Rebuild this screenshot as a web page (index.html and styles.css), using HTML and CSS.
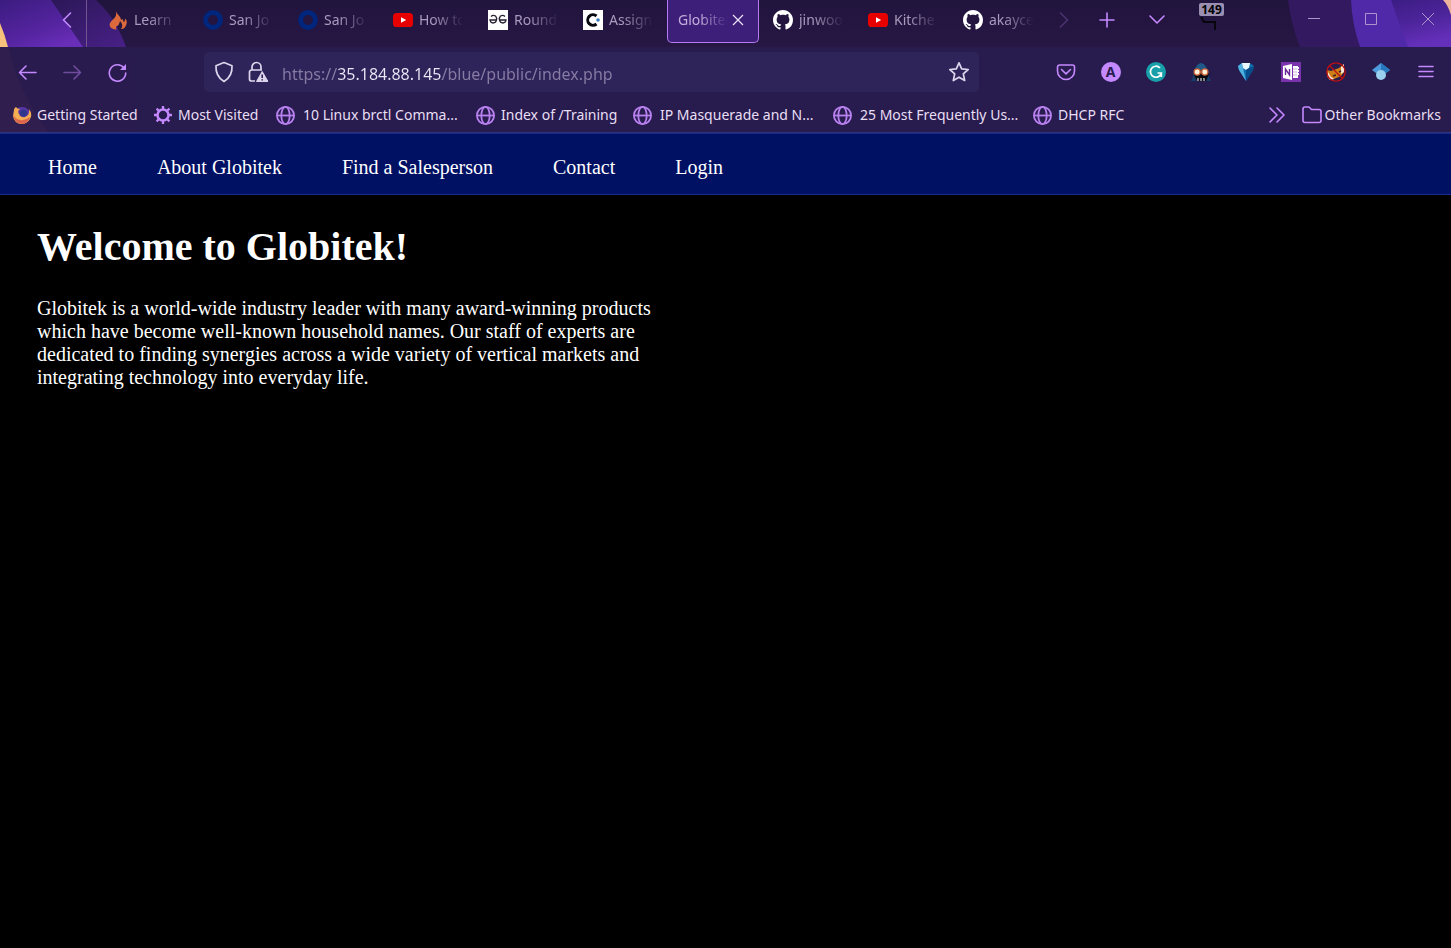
FILE: index.html
```
<!DOCTYPE html>
<html lang="en">
<head>
<meta charset="utf-8">
<title>Globitek</title>
<link rel="stylesheet" href="styles.css">
</head>
<body>
<svg class="sprite" aria-hidden="true">
  <symbol id="globe" viewBox="0 0 20 20"><g fill="none" stroke="currentColor" stroke-width="1.8"><circle cx="9.500" cy="10.500" r="8.600"/><ellipse cx="9.500" cy="10.500" rx="4.200" ry="8.600"/><path d="M1 10.500h17"/></g></symbol>
  <symbol id="ring" viewBox="0 0 20 20"><circle cx="10" cy="10" r="7.400" fill="none" stroke="#00257c" stroke-width="5"/></symbol>
  <symbol id="video" viewBox="0 0 20 20"><rect y="3" width="20" height="14" rx="3.600" fill="#e80000"/><path d="M8 7.200l5.200 2.800L8 12.800z" fill="#fff"/></symbol>
  <symbol id="github" viewBox="0 0 16 16"><path fill="#fff" d="M8 0C3.580 0 0 3.580 0 8c0 3.540 2.290 6.530 5.470 7.590.4.070.55-.17.55-.38 0-.19-.01-.82-.01-1.490-2.010.37-2.530-.49-2.690-.94-.09-.23-.48-.94-.82-1.130-.28-.15-.68-.52-.01-.53.63-.01 1.080.58 1.230.82.72 1.210 1.870.87 2.330.66.070-.52.280-.87.510-1.070-1.780-.2-3.640-.89-3.640-3.950 0-.87.310-1.590.82-2.150-.08-.2-.36-1.020.08-2.120 0 0 .67-.21 2.200.82.64-.18 1.320-.27 2-.27s1.360.09 2 .27c1.530-1.040 2.200-.82 2.200-.82.44 1.100.16 1.920.08 2.120.51.56.82 1.270.82 2.150 0 3.070-1.870 3.750-3.650 3.950.29.25.54.73.54 1.480 0 1.070-.01 1.930-.01 2.200 0 .21.15.46.55.38A8.010 8.010 0 0 0 16 8c0-4.420-3.580-8-8-8z"/></symbol>
</svg>
<header class="browser">
  <svg class="art art-left" width="150" height="132" viewBox="0 0 150 132" aria-hidden="true">
    <defs><linearGradient id="la" x1="0" y1="0" x2=".7" y2="1"><stop offset="0" stop-color="#3b1c80"/><stop offset=".65" stop-color="#5524a0"/><stop offset="1" stop-color="#692eb8"/></linearGradient>
    <linearGradient id="lb" x1="0" y1="0" x2="1" y2="1"><stop offset="0" stop-color="#2a1755"/><stop offset="1" stop-color="#482087"/></linearGradient></defs>
    <path d="M50 0h46q20 18 30 47H40z" fill="url(#lb)"/><path d="M0 0h51l32 47H0z" fill="url(#la)"/><path d="M0 23q5 12 8 24H0z" fill="#f7c27b"/>
    <path d="M0 47h126q12 42 8 85H0z" fill="#3a2058" opacity=".12"/><path d="M0 47h8q12 48 40 85H0z" fill="#3f2850" opacity=".25"/>
  </svg>
  <svg class="art art-right" width="171" height="47" viewBox="0 0 171 47" aria-hidden="true">
    <defs><linearGradient id="ra" x1="0" y1="0" x2=".3" y2="1"><stop offset="0" stop-color="#3c1d84"/><stop offset=".5" stop-color="#4c249a"/><stop offset="1" stop-color="#642fb9"/></linearGradient></defs>
    <path d="M8 0q3 25 12 47h60L71 0z" fill="#33195f"/><path d="M71 0q1 24 9 47h60V0z" fill="#4f29a8"/><path d="M111 0q8 24 17 47h43V0z" fill="url(#ra)"/><path d="M163 0q5 5 8 15V0z" fill="#edb39c"/>
  </svg>
  <div class="tabbar">
    <button class="scroll-left" aria-label="Scroll tabs left"><svg width="12" height="16" viewBox="0 0 12 16"><path d="M9.500 1L2.500 8l7 7" class="line"/></svg></button>
    <nav class="tabs" aria-label="Tabs">
      <button class="tab"><svg class="favicon" viewBox="0 0 20 20"><path d="M8 1c1 4 5 5 5 9l2-1q0 2 .5 3 2-1 1.500-3.500 3 2 1 7-2 4-5 3.500 3-4-1-8-1 5-4 5.500 0 3 1 3-7 0-7.500-5Q2 12 6 8.500 9 6 8 1z" fill="#dd6a3d"/></svg><span class="label">Learn</span></button>
      <button class="tab"><svg class="favicon"><use href="#ring"/></svg><span class="label">San Jo</span></button>
      <button class="tab"><svg class="favicon"><use href="#ring"/></svg><span class="label">San Jo</span></button>
      <button class="tab"><svg class="favicon"><use href="#video"/></svg><span class="label">How to</span></button>
      <button class="tab"><svg class="favicon" viewBox="0 0 20 20"><path d="M0 0h20v20H0z" fill="#fff"/><path d="M3 6.500q2-2 4.500-.5Q9 7.500 8.500 10q-.5 3-3.500 3-2.500 0-3-3h6.500M17 6.500q-2-2-4.500-.5Q11 7.500 11.500 10q.5 3 3.500 3 2.500 0 3-3H11.500" fill="none" stroke="#292133" stroke-width="1.300"/></svg><span class="label">Round</span></button>
      <button class="tab"><svg class="favicon" viewBox="0 0 20 20"><path d="M0 0h20v20H0z" fill="#fff"/><path d="M13.500 6A5.300 5.300 0 1 0 13.500 14" fill="none" stroke="#07080d" stroke-width="3"/><circle cx="15" cy="10" r="1.800" fill="#397bb8"/></svg><span class="label">Assign</span></button>
      <button class="tab active"><span class="label">Globitek</span><svg class="close" width="12" height="12" viewBox="0 0 12 12"><path d="M1 1l10 10M11 1L1 11" stroke="#ece3f7" stroke-width="1.200"/></svg></button>
      <button class="tab"><svg class="favicon"><use href="#github"/></svg><span class="label">jinwoo</span></button>
      <button class="tab"><svg class="favicon"><use href="#video"/></svg><span class="label">Kitche</span></button>
      <button class="tab"><svg class="favicon"><use href="#github"/></svg><span class="label">akayce</span></button>
    </nav>
    <div class="tab-tools">
      <button class="tool dim" aria-label="Scroll tabs right"><svg width="12" height="16" viewBox="0 0 12 16"><path d="M2.500 1l7 7-7 7" class="line"/></svg></button>
      <button class="tool" aria-label="New tab"><svg width="16" height="16" viewBox="0 0 16 16"><path d="M8 1v14M1 8h14" class="line"/></svg></button>
      <button class="tool list" aria-label="List all tabs"><svg width="16" height="16" viewBox="0 0 16 16"><path d="M1 4l7 7 7-7" class="line"/></svg></button>
      <button class="counter" aria-label="149 tabs"><svg width="18" height="14" viewBox="0 0 18 14"><path d="M2 0l3 5h11v8" fill="none" stroke="#08060d" stroke-width="2"/></svg><span class="badge">149</span></button>
    </div>
    <div class="window-controls">
      <button aria-label="Minimize"><svg width="14" height="14" viewBox="0 0 14 14"><path d="M1 6.500h12"/></svg></button>
      <button aria-label="Maximize"><svg width="14" height="14" viewBox="0 0 14 14"><path d="M1.500 1.500h11v11h-11z"/></svg></button>
      <button aria-label="Close"><svg width="14" height="14" viewBox="0 0 14 14"><path d="M1 1l12 12M13 1L1 13"/></svg></button>
    </div>
  </div>
  <div class="toolbar">
    <div class="buttons">
      <button aria-label="Back"><svg viewBox="0 0 20 20"><path d="M18 10.500H1.500M8 4l-6.500 6.500L8 17" class="line"/></svg></button>
      <button class="faded" aria-label="Forward"><svg viewBox="0 0 20 20"><path d="M1 10.500h16.500M11 4l6.500 6.500L11 17" class="line"/></svg></button>
      <button aria-label="Reload"><svg viewBox="0 0 20 20"><path d="M16 6A8.200 8.200 0 1 0 17.700 11" class="line"/><path d="M18 2v6h-6z" fill="#c489ff"/></svg></button>
    </div>
    <div class="address">
      <svg width="20" height="22" viewBox="0 0 20 22"><path d="M10 1.500l8 3.200c.4 6-1.800 12-8 15.800-6.200-3.800-8.400-9.800-8-15.800z" class="pale"/></svg>
      <svg width="20" height="22" viewBox="0 0 20 22"><path d="M4 9V6a4.500 4.500 0 0 1 9 0v3M7 20H3.500A2 2 0 0 1 1.500 18v-7a2 2 0 0 1 2-2H14" class="pale"/><path d="M14.200 10.500L20 20.500H8.500z" fill="#ded5ed" stroke="#ded5ed" stroke-linejoin="round"/><path d="M14.200 13.500v3.500m0 1.200v1.300" stroke="#2d2359" stroke-width="1.600"/></svg>
      <input class="url" type="text" aria-label="Address" value="https://35.184.88.145/blue/public/index.php">
      <button class="star" aria-label="Bookmark this page"><svg width="22" height="22" viewBox="0 0 22 22"><path d="M11 1.800l2.700 6 6.500.7-4.900 4.400 1.400 6.600-5.700-3.300-5.700 3.300 1.400-6.600-4.900-4.400 6.500-.7z" class="pale"/></svg></button>
    </div>
    <div class="buttons">
      <button aria-label="Pocket"><svg viewBox="0 0 20 20"><path d="M3.500 3h13A2 2 0 0 1 18.500 5v4a8.500 8.500 0 0 1-17 0V5a2 2 0 0 1 2-2zM5.500 7.500l4.500 4.300 4.500-4.300" class="line"/></svg></button>
      <button class="account" aria-label="Account"><span>A</span></button>
      <button aria-label="Grammar checker"><svg viewBox="0 0 20 20"><circle cx="10" cy="10" r="10" fill="#189faa"/><path d="M14 6A5.500 5.500 0 1 0 15.300 11H11.500M15.300 11v4" fill="none" stroke="#fff" stroke-width="1.700"/></svg></button>
      <button aria-label="Privacy extension"><svg viewBox="0 0 20 20"><path d="M0 19l2-5q1-12 8-13 7 1 8 13l2 5z" fill="#173c68"/><path d="M3 13l3 6h9l3-7-4-6H6z" fill="#080811"/><path d="M10 1q4 1 5 5l-4 2-2 0-4-2q1-4 5-5z" fill="#205889"/><g fill="#fff0da" stroke="#cf663a" stroke-width="1.300"><circle cx="6.200" cy="10" r="3.100"/><circle cx="13.800" cy="10" r="3.100"/></g><path d="M7 16v3m3-3v3m3-3v3" stroke="#ddd" stroke-width="1.200"/></svg></button>
      <button aria-label="Gem extension"><svg viewBox="0 0 20 20"><path d="M2 4l4-3h8l4 3-1 4-7 11L3 8z" fill="#126fae"/><path d="M2 4l4-3 1 5 3 13L3 8z" fill="#4fb2e0"/><path d="M6 1h8l-1 5-3 2-3-2z" fill="#e9faff"/><path d="M10 8l3-2 5-2-1 4-7 11z" fill="#094c8c"/></svg></button>
      <button aria-label="OneNote clipper"><svg viewBox="0 0 20 20"><path d="M0 0h20v20H0z" fill="#7a32ad"/><path d="M2 4l9-2v16l-9-2zM12 4h5v1h1v2h-1v1h1v2h-1v1h1v2h-1v3h-5z" fill="#fff"/><path d="M4.500 13V7l4 6V7" fill="none" stroke="#6b2798" stroke-width="1.400"/><path d="M12 7h4m-4 3h4m-4 3h4" stroke="#cbaadf"/></svg></button>
      <button aria-label="Fox blocker"><svg viewBox="0 0 20 20"><path d="M1 8l4 1 8-3 5-4v8l-3 4-7 3-4 1-3-4z" fill="#cf7d17"/><path d="M2 10l3 5 3 2-4 1-3-4zM15 5l3-3v8l-3 2z" fill="#f5e5d7"/><path d="M7 14l3-1m3-3l2-1" stroke="#3c202b" stroke-width="1.500"/><g fill="none" stroke="#bd1010" stroke-width="1.300"><circle cx="10" cy="10" r="9.200"/><path d="M3.500 3.500l13 13"/></g></svg></button>
      <button aria-label="Scholar"><svg viewBox="0 0 20 20"><path d="M10 1l9 7-4 3H5L1 8z" fill="#4d9bdc"/><path d="M10 1l9 7-4 3-5-2z" fill="#2878bd"/><circle cx="10" cy="13" r="5" fill="#9bd0ef"/></svg></button>
      <button aria-label="Menu"><svg viewBox="0 0 20 20"><path d="M3 4.500h14M3 9.500h14M3 14.500h14" class="line"/></svg></button>
    </div>
  </div>
  <nav class="bookmarks" aria-label="Bookmarks">
    <a class="bookmark first" href="#"><svg class="favicon" viewBox="0 0 20 20"><circle cx="10" cy="10.500" r="8.500" fill="#5a37a8"/><path d="M2 5q0-2 2-3 1 2 4 2-3 2-1 5 2 4 6 3 5-2 4-8 4 5 1 10-3 5-9 5-7-1-8-8z" fill="#f4ad52"/><path d="M1 8q1 6 7 7 5 1 10-3-2 7-8 7-8 0-9-11z" fill="#dd654e"/><circle cx="11.500" cy="8" r="3.600" fill="#30368c"/></svg>Getting Started</a>
    <a class="bookmark second" href="#"><svg class="favicon" viewBox="0 0 20 20"><g fill="none" stroke="#c489ff"><circle cx="10" cy="10" r="5.500" stroke-width="2.500"/><path d="M10 1v3m0 12v3M1 10h3m12 0h3M3.600 3.600l2.200 2.200m8.400 8.400l2.200 2.200m0-12.800l-2.200 2.200m-8.400 8.400l-2.200 2.200" stroke-width="2.300"/></g></svg>Most Visited</a>
    <a class="bookmark wide" href="#"><svg class="favicon"><use href="#globe"/></svg>10 Linux brctl Comma...</a>
    <a class="bookmark fourth" href="#"><svg class="favicon"><use href="#globe"/></svg>Index of /Training</a>
    <a class="bookmark wide" href="#"><svg class="favicon"><use href="#globe"/></svg>IP Masquerade and N...</a>
    <a class="bookmark wide" href="#"><svg class="favicon"><use href="#globe"/></svg>25 Most Frequently Us...</a>
    <a class="bookmark" href="#"><svg class="favicon"><use href="#globe"/></svg>DHCP RFC</a>
    <button class="more" aria-label="More bookmarks"><svg width="18" height="18" viewBox="0 0 18 18"><path d="M2 2l7 7-7 7M9 2l7 7-7 7" class="line"/></svg></button>
    <a class="bookmark other" href="#"><svg class="favicon" viewBox="0 0 20 20"><path d="M3 2h4l2.500 2.500H17A2 2 0 0 1 19 6.500v9A2 2 0 0 1 17 17.500H3A2 2 0 0 1 1 15.500V4A2 2 0 0 1 3 2z" class="line"/></svg>Other Bookmarks</a>
  </nav>
</header>
<nav class="site-nav" aria-label="Main">
  <a href="#">Home</a><a href="#">About Globitek</a><a href="#">Find a Salesperson</a><a href="#">Contact</a><a href="#">Login</a>
</nav>
<main class="content">
  <h1>Welcome to Globitek!</h1>
  <p>Globitek is a world-wide industry leader with many award-winning products which have become well-known household names. Our staff of experts are dedicated to finding synergies across a wide variety of vertical markets and integrating technology into everyday life.</p>
</main>
</body>
</html>
```

FILE: styles.css
```
* { box-sizing: border-box; }
body { margin: 0; background: #000; color: #fff; font: 20px/23px "Liberation Serif", serif; }
a { color: inherit; text-decoration: none; }
button { padding: 0; border: 0; background: none; color: inherit; font: inherit; }
svg { display: block; flex: none; }
.sprite { position: absolute; width: 0; height: 0; }
.line { fill: none; stroke: #c489ff; stroke-width: 1.6; stroke-linecap: round; stroke-linejoin: round; }
.pale { fill: none; stroke: #ded5ed; stroke-width: 1.7; stroke-linejoin: round; }
.favicon { width: 20px; height: 20px; }

.browser { position: relative; background: #281b4d; color: #e8dff5; font: 14px/20px "Noto Sans", sans-serif; border-bottom: 1px solid #31307a; overflow: hidden; }
.art { position: absolute; top: 0; z-index: 1; pointer-events: none; }
.art-left { left: 0; }
.art-right { right: 0; }

.tabbar { display: flex; height: 47px; background: linear-gradient(#21143d, #261744); }
.tabbar > * { position: relative; z-index: 2; }
.scroll-left { width: 87px; display: flex; align-items: center; justify-content: flex-end; padding: 0 13px 7px 0; border-right: 1px solid #72558e; }
.tabs { display: flex; gap: 3px; margin-left: 10px; }
.tab { display: flex; align-items: center; gap: 6px; width: 92px; height: 43px; padding: 0 8px 3px 11px; color: #a99bbd; }
.tab .label { flex: 1; min-width: 0; overflow: hidden; white-space: nowrap; text-align: left; line-height: 22px; -webkit-mask-image: linear-gradient(90deg, #000 30%, transparent 95%); mask-image: linear-gradient(90deg, #000 30%, transparent 95%); }
.tab.active { padding: 0 14px 3px 10px; gap: 4px; background: #3d1f7a; border: 1px solid #b77bf0; border-top: 0; border-radius: 0 0 5px 5px; color: #c5aedb; }
.tab.active .label { -webkit-mask-image: linear-gradient(90deg, #000 40%, transparent); mask-image: linear-gradient(90deg, #000 40%, transparent); }
.tab-tools { display: flex; margin-left: 1px; }
.tool { display: flex; align-items: center; justify-content: center; width: 48px; height: 40px; }
.list { width: 52px; }
.dim { opacity: .25; width: 38px; }
.counter { width: 52px; padding: 0 0 0 16px; height: 47px; }
.badge { position: absolute; top: 3px; right: 11px; width: 25px; height: 13px; border-radius: 2px; background: #9b8fb1; color: #000; font: bold 12px/13px "Noto Sans", sans-serif; text-align: center; }
.window-controls { display: flex; gap: 11px; margin-left: auto; }
.window-controls button { display: grid; place-items: center; width: 46px; height: 38px; }
.window-controls path { fill: none; stroke: #ac94cc; stroke-width: 1; }

.toolbar { position: relative; z-index: 2; display: flex; align-items: center; gap: 64px; height: 50px; padding: 0 3px 0 5px; }
.buttons { display: flex; }
.buttons button { display: grid; place-items: center; width: 45px; height: 40px; }
.buttons svg { width: 20px; height: 20px; }
.buttons .faded { opacity: .45; }
.account span { width: 20px; height: 20px; border-radius: 50%; background: #c489ff; color: #281b4d; font-weight: bold; }
.address { flex: 1; min-width: 0; display: flex; align-items: center; gap: 14px; height: 40px; padding: 0 9px 0 10px; background: #2e2459; border-radius: 5px; }
.url { flex: 1; min-width: 0; height: 34px; padding: 3px 0 0; border: 0; outline: 0; color: transparent; font: 16px/24px "Noto Sans", sans-serif; background: linear-gradient(90deg, #887ca5 56px, #eee7f8 56px 160px, #887ca5 160px); -webkit-background-clip: text; background-clip: text; }

.bookmarks { position: relative; z-index: 2; display: flex; align-items: center; height: 35px; padding: 1px 10px 0 12px; white-space: nowrap; }
.bookmark { display: flex; align-items: center; gap: 5px; }
.first { width: 141px; }
.second { width: 123px; }
.wide { width: 200px; gap: 7px; }
.fourth { width: 157px; }
.other { gap: 3px; }
.bookmark .favicon { color: #b881f0; }
.more { margin-left: auto; margin-right: 16px; }

.site-nav { display: flex; flex-wrap: wrap; gap: 0 60px; padding: 22px 48px 15px; background: #001063; border: solid #142b8b; border-width: 1px 0; }
.content { padding: 29px 37px; }
h1 { margin: 0 0 27px; font-size: 40px; line-height: 46px; }
p { max-width: 640px; margin: 0; }
```
